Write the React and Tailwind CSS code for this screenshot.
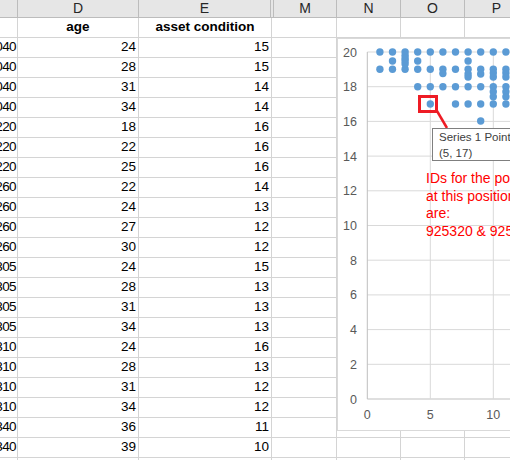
import React from 'react';

const rows = [
  ['925040', 24, 15], ['925040', 28, 15], ['925040', 31, 14], ['925040', 34, 14],
  ['925220', 18, 16], ['925220', 22, 16], ['925220', 25, 16],
  ['925260', 22, 14], ['925260', 24, 13], ['925260', 27, 12], ['925260', 30, 12],
  ['925305', 24, 15], ['925305', 28, 13], ['925305', 31, 13], ['925305', 34, 13],
  ['925310', 24, 16], ['925310', 28, 13], ['925310', 31, 12], ['925310', 34, 12],
  ['925340', 36, 11], ['925340', 39, 10], ['925345', 40, 10],
];

// chart maps data to page pixels
const px = (k) => 367.3 + 12.6 * k;
const py = (v) => 399 - 17.35 * v;

const dots = [];
for (let k = 1; k <= 12; k++) { dots.push([k, 52]); dots.push([k, 69.3]); }
[[2, 61], [3, 55.5], [3, 58.5], [3, 61], [3, 64], [4, 61], [8, 61],
 [6, 73.5], [8, 74], [8, 77], [9, 74], [10, 73], [10, 77], [11, 73], [11, 77],
 [12, 74], [12, 77]].forEach((d) => dots.push(d));
for (let k = 4; k <= 12; k++) dots.push([k, 86.7]);
[[10, 91.7], [10, 96.7], [11, 91.7], [11, 96.7], [12, 91.7]].forEach((d) => dots.push(d));
[5, 7, 8, 9, 10, 11, 12].forEach((k) => dots.push([k, 104]));
dots.push([9, 121]);

const cell = 'h-[20px] shrink-0 border-r border-b border-[#d4d4d4] flex items-center';
const head = 'h-[18px] shrink-0 border-r border-b border-[#bcbcbc] flex items-center justify-center text-[14px] text-[#262626]';

function Chart() {
  const grid = [];
  for (let v = 0; v <= 20; v += 2) grid.push(v);
  return (
    <div className="absolute left-[337px] top-[38px] w-[200px] h-[393px] bg-white border border-[#d9d9d9]">
      <svg className="absolute left-0 top-0" width="198" height="391" viewBox="338 39 198 391">
        {grid.map((v) => (
          <line key={v} x1="367.3" x2="540" y1={py(v)} y2={py(v)} stroke={v === 0 ? '#bfbfbf' : '#d9d9d9'} strokeWidth="1" />
        ))}
        {[5, 10, 15].map((k) => (
          <line key={k} x1={px(k)} x2={px(k)} y1={py(20)} y2={py(0)} stroke="#d9d9d9" strokeWidth="1" />
        ))}
        <line x1="367.3" x2="367.3" y1={py(20)} y2={py(0)} stroke="#bfbfbf" strokeWidth="1" />
        {grid.map((v) => (
          <text key={v} x="357" y={py(v) + 4.5} textAnchor="end" fontSize="12.5" fill="#595959" fontFamily="'Liberation Sans', Arial, sans-serif">{v}</text>
        ))}
        {[0, 5, 10].map((k) => (
          <text key={k} x={px(k)} y="419" textAnchor="middle" fontSize="12.5" fill="#595959" fontFamily="'Liberation Sans', Arial, sans-serif">{k}</text>
        ))}
        {dots.map(([k, y], i) => (
          <circle key={i} cx={px(k)} cy={y} r="3.7" fill="#5b9bd5" />
        ))}
        <rect x="419.5" y="96.5" width="17" height="15" fill="none" stroke="#ee1c25" strokeWidth="3" />
        <line x1="437" x2="447" y1="111" y2="128" stroke="#ee1c25" strokeWidth="2.5" />
      </svg>
      <div className="absolute left-[94px] top-[89px] w-[130px] h-[33px] bg-white border border-[#7f7f7f] pl-[6px] pt-[1px] text-[11.5px] leading-[15.5px] text-[#404040] whitespace-nowrap">
        <div>Series 1 Point "925320"</div>
        <div>(5, 17)</div>
      </div>
      <div className="absolute left-[88px] top-[131px] text-[14px] leading-[17.7px] text-[#ff0000] whitespace-nowrap">
        <div>IDs for the points</div>
        <div>at this position</div>
        <div>are:</div>
        <div>925320 &amp; 925321</div>
      </div>
    </div>
  );
}

export default function App() {
  return (
    <div className="relative w-[510px] h-[460px] overflow-hidden bg-white" style={{ fontFamily: "'Liberation Sans', Arial, sans-serif" }}>
      <div className="flex bg-[#e6e6e6]">
        <div className={`${head} w-[18px]`}></div>
        <div className={`${head} w-[121px]`}>D</div>
        <div className={`${head} w-[132px]`}>E</div>
        <div className={`${head} w-[3px]`}></div>
        <div className={`${head} w-[63px]`}>M</div>
        <div className={`${head} w-[64px]`}>N</div>
        <div className={`${head} w-[64px]`}>O</div>
        <div className={`${head} w-[64px]`}>P</div>
      </div>
      <div className="flex text-[13.5px] text-black">
        <div className={`${cell} w-[18px]`}></div>
        <div className={`${cell} w-[121px] justify-center font-bold`}>age</div>
        <div className={`${cell} w-[133px] justify-center font-bold`}>asset condition</div>
        <div className={`${cell} w-[65px]`}></div>
        <div className={`${cell} w-[64px]`}></div>
        <div className={`${cell} w-[64px]`}></div>
        <div className={`${cell} w-[64px]`}></div>
      </div>
      {rows.map((r, i) => (
        <div key={i} className="flex text-[13.5px] text-black">
          <div className={`${cell} w-[18px] justify-end overflow-hidden whitespace-nowrap pr-[1px]`}><span className="shrink-0 tracking-[-0.6px]">{r[0]}</span></div>
          <div className={`${cell} w-[121px] justify-end pr-[2px]`}>{r[1]}</div>
          <div className={`${cell} w-[133px] justify-end pr-[2px]`}>{r[2]}</div>
          <div className={`${cell} w-[65px]`}></div>
          <div className={`${cell} w-[64px]`}></div>
          <div className={`${cell} w-[64px]`}></div>
          <div className={`${cell} w-[64px]`}></div>
        </div>
      ))}
      <Chart />
    </div>
  );
}
